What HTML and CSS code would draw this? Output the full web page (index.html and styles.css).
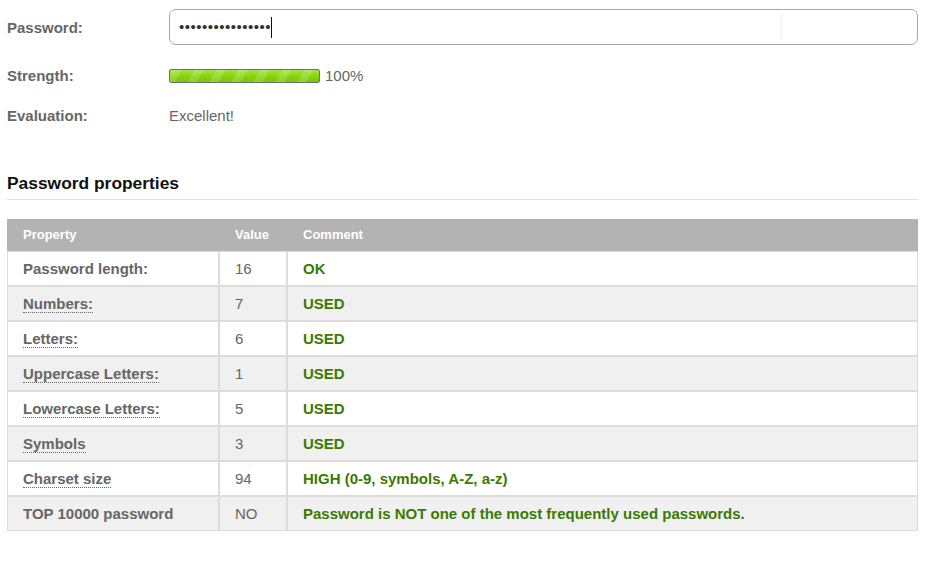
FILE: index.html
```html
<!DOCTYPE html>
<html>
<head>
<meta charset="utf-8">
<link rel="stylesheet" href="styles.css">
</head>
<body>
<div class="page">
  <div class="form">
    <div class="row row-pass">
      <div class="label">Password:</div>
      <div class="input">
        <div class="field"><span class="dots">••••••••••••••••</span><span class="caret"></span></div>
        <div class="addon"></div>
      </div>
    </div>
    <div class="row row-strength">
      <div class="label">Strength:</div>
      <div class="meter"><div class="meter-fill"></div></div>
      <span class="pct">100%</span>
    </div>
    <div class="row row-eval">
      <div class="label">Evaluation:</div>
      <div class="value">Excellent!</div>
    </div>
  </div>

  <h2 class="heading">Password properties</h2>

  <table class="props">
    <colgroup><col class="c1"><col class="c2"><col class="c3"></colgroup>
    <thead>
      <tr><th>Property</th><th>Value</th><th>Comment</th></tr>
    </thead>
    <tbody>
      <tr><td class="prop">Password length:</td><td class="val">16</td><td class="ok">OK</td></tr>
      <tr class="alt"><td class="prop"><abbr>Numbers:</abbr></td><td class="val">7</td><td class="ok">USED</td></tr>
      <tr><td class="prop"><abbr>Letters:</abbr></td><td class="val">6</td><td class="ok">USED</td></tr>
      <tr class="alt"><td class="prop"><abbr>Uppercase Letters:</abbr></td><td class="val">1</td><td class="ok">USED</td></tr>
      <tr><td class="prop"><abbr>Lowercase Letters:</abbr></td><td class="val">5</td><td class="ok">USED</td></tr>
      <tr class="alt"><td class="prop"><abbr>Symbols</abbr></td><td class="val">3</td><td class="ok">USED</td></tr>
      <tr><td class="prop"><abbr>Charset size</abbr></td><td class="val">94</td><td class="ok">HIGH (0-9, symbols, A-Z, a-z)</td></tr>
      <tr class="alt"><td class="prop">TOP 10000 password</td><td class="val">NO</td><td class="ok">Password is NOT one of the most frequently used passwords.</td></tr>
    </tbody>
  </table>
</div>
</body>
</html>
```

FILE: styles.css
```css
* { box-sizing: border-box; }
html, body { margin: 0; padding: 0; background: #fff; }
body { font-family: "Liberation Sans", Arial, sans-serif; font-size: 15px; color: #666; }
.page { padding: 9px 10px 0 7px; width: 928px; }

.row { display: flex; align-items: center; }
.label { width: 162px; flex: none; font-weight: bold; color: #666; line-height: 18px; padding-top: 2px; }
.row-pass { height: 36px; }
.row-strength { margin-top: 20px; height: 20px; }
.row-eval { margin-top: 20px; height: 20px; }

.input {
  flex: 1; height: 36px; display: flex;
  border: 1px solid #a6a6a6; border-radius: 7px; background: #fff;
}
.field { flex: 1; display: flex; align-items: center; padding-left: 9px; }
.dots { color: #333; font-size: 15px; letter-spacing: 0.5px; line-height: 20px; }
.caret { width: 1px; height: 21px; background: #111; }
.addon { width: 136px; flex: none; border-left: 1px solid #f3f3f3; margin: 2px 0; }

.meter {
  width: 151px; height: 14px; border: 1px solid #6e6e6e; border-radius: 2px;
  background: #eee; margin-top: 1px;
}
.meter-fill {
  width: 100%; height: 100%; border-radius: 1px;
  background:
    repeating-linear-gradient(-60deg, rgba(255,255,255,0) 0 11px, rgba(255,255,255,0.16) 11px 19px),
    linear-gradient(#a4e24a, #86d30c 55%, #79c800);
}
.pct { margin-left: 5px; color: #666; line-height: 18px; padding-top: 2px; }
.value { color: #666; line-height: 18px; padding-top: 2px; }

.heading {
  margin: 48px 0 0; padding-bottom: 6px; font-size: 17.4px; font-weight: bold; color: #111;
  line-height: 20px; border-bottom: 1px solid #e0e0e0;
}

.props {
  margin-top: 19px; width: 911px; table-layout: fixed;
  border-collapse: separate; border-spacing: 0;
}
.c1 { width: 212px; }
.c2 { width: 68px; }
.c3 { width: 631px; }
.props th {
  background: #b3b3b3; color: #fff; font-size: 13px; font-weight: bold; text-align: left;
  height: 32px; padding: 0 0 0 16px; line-height: 16px;
}
.props td {
  border: 1px solid #dcdcdc; height: 35px; padding: 0 0 0 15px; line-height: 18px;
  background: #fff;
}
.props tr.alt td { background: #f0f0f0; }
.prop { font-weight: bold; color: #666; }
.val { color: #666; }
.ok { font-weight: bold; color: #3b7a00; }
abbr { text-decoration: none; border-bottom: 1px dotted #666; }
```
